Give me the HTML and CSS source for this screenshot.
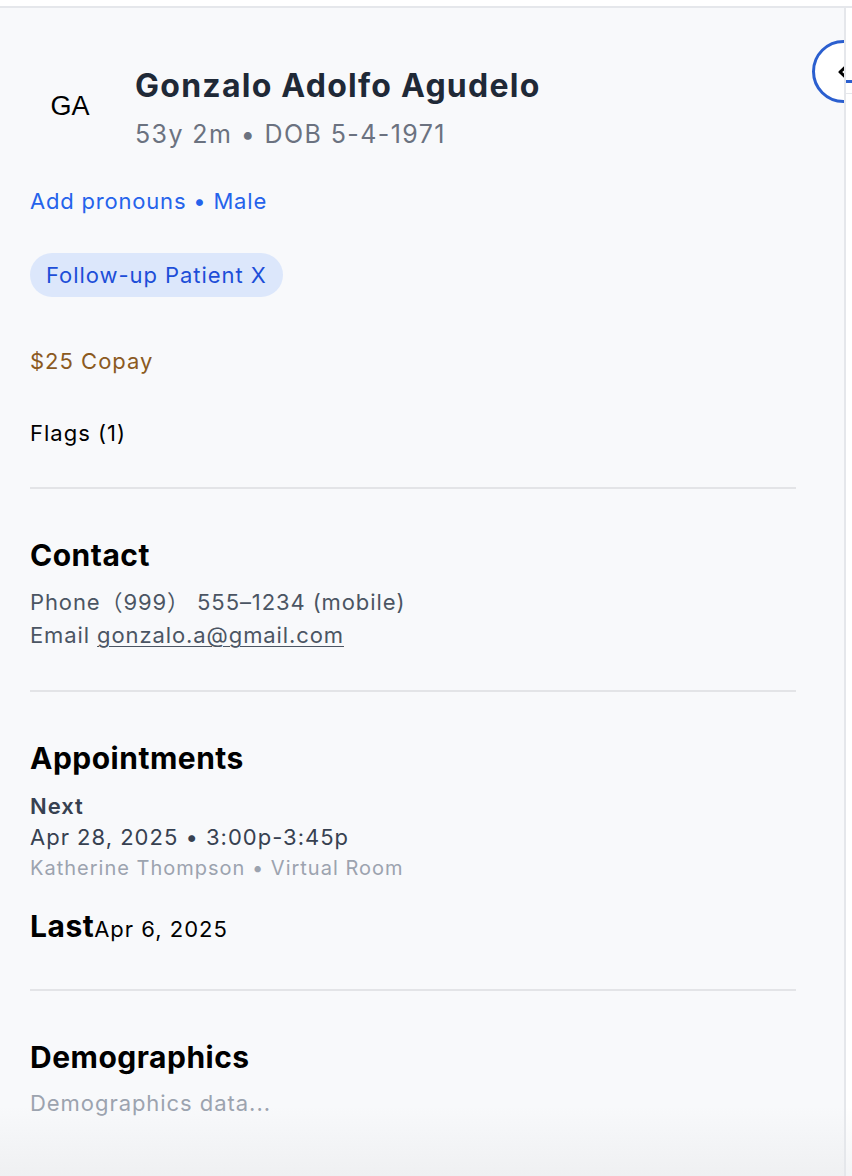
FILE: index.html
```html
<!DOCTYPE html>
<html lang="en">
<head>
<meta charset="utf-8">
<title>Patient</title>
<link rel="stylesheet" href="styles.css">
</head>
<body>
<div class="page">
  <main class="panel">
    <button class="collapse-btn" aria-label="Collapse">
      <svg width="12" height="14" viewBox="0 0 12 14"><polyline points="8.5,2 3,7 8.5,12" fill="none" stroke="#000" stroke-width="3" stroke-linecap="round" stroke-linejoin="round"/></svg>
    </button>

    <header class="header">
      <div class="avatar">GA</div>
      <div class="identity">
        <h1 class="name">Gonzalo Adolfo Agudelo</h1>
        <div class="sub">53y 2m • DOB 5-4-1971</div>
      </div>
    </header>

    <div class="pronouns">Add pronouns • Male</div>

    <div class="chips"><span class="chip">Follow-up Patient X</span></div>

    <div class="copay">$25 Copay</div>
    <div class="flags">Flags (1)</div>

    <hr class="divider">

    <section class="section">
      <h2 class="section-title">Contact</h2>
      <div class="contact-line first">Phone（999） 555–1234 (mobile)</div>
      <div class="contact-line">Email <a class="email" href="#">gonzalo.a@gmail.com</a></div>
    </section>

    <hr class="divider">

    <section class="section">
      <h2 class="section-title">Appointments</h2>
      <div class="appt-label">Next</div>
      <div class="appt-when">Apr 28, 2025 • 3:00p-3:45p</div>
      <div class="appt-meta">Katherine Thompson • Virtual Room</div>
      <div class="last"><span class="last-label">Last</span><span class="last-date">Apr 6, 2025</span></div>
    </section>

    <hr class="divider divider-demo">

    <section class="section">
      <h2 class="section-title">Demographics</h2>
      <div class="demo-data">Demographics data...</div>
    </section>
  </main>
  <aside class="side">
    <div class="side-tab"></div>
    <div class="side-rule"></div>
  </aside>
</div>
</body>
</html>
```

FILE: styles.css
```css
* { box-sizing: border-box; }

html, body {
  margin: 0;
  padding: 0;
  background: #ffffff;
}

body {
  font-family: Inter, "Noto Sans", "Noto Sans CJK SC", sans-serif;
  color: #000;
  letter-spacing: 0.045em;
}

.page {
  margin-top: 6px;
  border-top: 2px solid #e5e7eb;
  display: flex;
  height: 1170px;
}

.panel {
  position: relative;
  overflow: hidden;
  width: 846px;
  flex: none;
  border-right: 2px solid #e5e7eb;
  background: linear-gradient(to bottom, #f8f9fb 0, #f8f9fb calc(100% - 70px), #eff0f2 100%);
  padding: 58px 48px 0 30px;
}

.collapse-btn {
  position: absolute;
  top: 32px;
  right: -31px;
  width: 63px;
  height: 63px;
  border-radius: 50%;
  border: 3px solid #2b5fcf;
  background: #ffffff;
  padding: 0 0 0 22px;
  display: flex;
  align-items: center;
  justify-content: flex-start;
}

.collapse-btn svg { display: block; }

.header {
  display: flex;
  align-items: center;
  gap: 25px;
}

.avatar {
  width: 80px;
  height: 80px;
  flex: none;
  display: flex;
  align-items: center;
  justify-content: center;
  padding-bottom: 4px;
  font-family: "Liberation Sans", Arial, sans-serif;
  font-size: 27px;
  letter-spacing: 0;
  color: #000;
}

.name {
  margin: 0;
  font-size: 32px;
  line-height: 40px;
  font-weight: 700;
  color: #1f2937;
  letter-spacing: 1.25px;
}

.sub {
  margin-top: 12px;
  font-size: 25px;
  line-height: 32px;
  color: #6b7280;
  letter-spacing: 1.4px;
}

.pronouns {
  margin-top: 35px;
  font-size: 22px;
  line-height: 32px;
  color: #2563eb;
  letter-spacing: 0.8px;
}

.chips {
  margin-top: 36px;
  display: flex;
}

.chip {
  display: inline-flex;
  align-items: center;
  height: 44px;
  padding: 0 16px;
  border-radius: 22px;
  background: #dce7fb;
  color: #1d4ed8;
  font-size: 22px;
  letter-spacing: 0.95px;
}

.copay {
  margin-top: 48px;
  font-size: 22px;
  line-height: 32px;
  color: #8b5a1f;
  letter-spacing: 1px;
}

.flags {
  margin-top: 40px;
  font-size: 22px;
  line-height: 32px;
  color: #000;
  letter-spacing: 1px;
}

.divider {
  margin: 38px 0 0 0;
  border: 0;
  height: 2px;
  background: #e3e4e7;
}

.divider-demo { margin-top: 40px; }

.section { padding-top: 48px; }

.section-title {
  margin: 0;
  font-size: 30px;
  line-height: 36px;
  font-weight: 700;
  color: #000;
  letter-spacing: 0.5px;
}

.contact-line {
  font-size: 22px;
  line-height: 33px;
  color: #4b5563;
  letter-spacing: 0.9px;
}

.contact-line.first { margin-top: 13px; }

.email {
  color: #4b5563;
  text-decoration: underline;
  text-underline-offset: 3px;
  text-decoration-thickness: 1px;
}

.appt-label {
  margin-top: 15px;
  font-size: 22px;
  line-height: 30px;
  font-weight: 600;
  color: #374151;
  letter-spacing: 1px;
}

.appt-when {
  font-size: 22px;
  line-height: 32px;
  color: #374151;
  letter-spacing: 1px;
}

.appt-meta {
  font-size: 20px;
  line-height: 30px;
  color: #9ca3af;
  letter-spacing: 1px;
}

.last {
  margin-top: 25px;
  line-height: 36px;
}

.last-label {
  font-size: 30px;
  font-weight: 700;
  color: #000;
  letter-spacing: 0.5px;
}

.last-date {
  font-size: 22px;
  color: #000;
  letter-spacing: 1px;
}

.demo-data {
  margin-top: 12px;
  font-size: 22px;
  line-height: 32px;
  color: #9ca3af;
  letter-spacing: 0.95px;
}

.side {
  flex: 1;
  background: linear-gradient(to bottom, #ffffff 0, #ffffff calc(100% - 70px), #f3f4f6 100%);
}

.side-tab {
  height: 75px;
  border-bottom: 3px solid #2b5fcf;
}

.side-rule {
  margin-top: 10px;
  height: 1px;
  background: #e5e7eb;
}
```
